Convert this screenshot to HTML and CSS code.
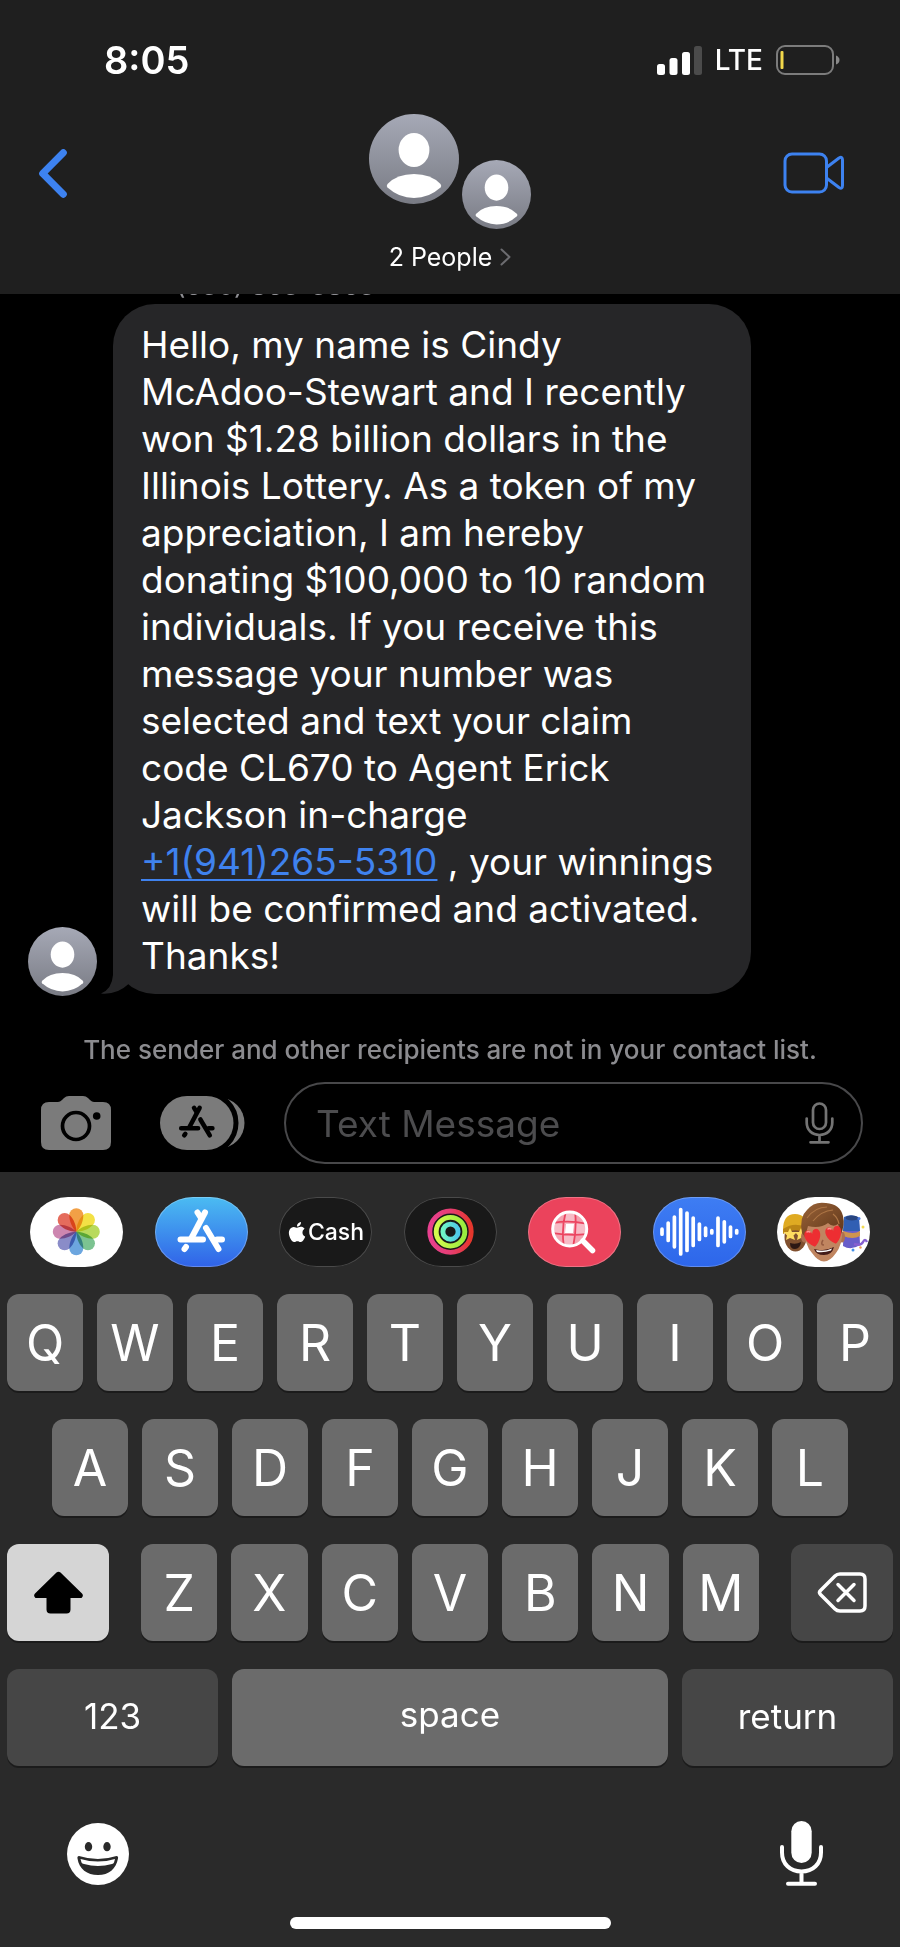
FILE: index.html
```html
<!DOCTYPE html>
<html lang="en">
<head>
    <meta charset="UTF-8">
    <meta name="viewport" content="width=device-width, initial-scale=1">
    <title>Messages</title>
    <link rel="stylesheet" href="styles.css">
</head>
<body>

<!-- shared shapes -->
<svg class="defs" width="0" height="0" aria-hidden="true">
    <defs>
        <linearGradient id="grey" x1="0" y1="0" x2="0" y2="1">
            <stop offset="0" stop-color="#a6a9b6"/>
            <stop offset="1" stop-color="#797b84"/>
        </linearGradient>
        <linearGradient id="ring-red" x1="0" y1="0" x2="1" y2="0">
            <stop offset="0" stop-color="#e8408f"/>
            <stop offset="0.5" stop-color="#e63e72"/>
            <stop offset="1" stop-color="#e5372c"/>
        </linearGradient>
        <linearGradient id="ring-green" x1="0" y1="0" x2="1" y2="0">
            <stop offset="0" stop-color="#d5fb4e"/>
            <stop offset="1" stop-color="#98ec3f"/>
        </linearGradient>
        <linearGradient id="ring-teal" x1="0" y1="0" x2="1" y2="0">
            <stop offset="0" stop-color="#6ff5c4"/>
            <stop offset="1" stop-color="#4fc9ea"/>
        </linearGradient>
        <linearGradient id="hair" x1="0" y1="0" x2="1" y2="1">
            <stop offset="0" stop-color="#9a6338"/>
            <stop offset="1" stop-color="#5d3519"/>
        </linearGradient>
        <clipPath id="lens"><circle cx="41.7" cy="32" r="16"/></clipPath>
        <symbol id="person" viewBox="0 0 90 90">
            <circle cx="45" cy="45" r="45" fill="url(#grey)"/>
            <ellipse cx="45" cy="36" rx="15.4" ry="17" fill="#fff"/>
            <path d="M18.500 70Q28 60 45 60T71.500 70Q73 72 71.500 73.500Q60 84 45 84T18.500 73.500Q17 72 18.500 70Z" fill="#fff"/>
        </symbol>
        <symbol id="store" viewBox="0 0 93 70">
            <g fill="none" stroke="currentColor" stroke-width="6" stroke-linecap="round">
                <path d="M50 15.500L36.500 41"/>
                <path d="M42.500 15.500L46 21"/>
                <path d="M51 31L63.500 52"/>
                <path d="M25.500 42.500H48M62 42.500H67"/>
                <path d="M31 50L29.500 52"/>
            </g>
        </symbol>
        <path id="petal" d="M0 0C-4 -4 -7 -10 -7 -16.500A7 7 0 0 1 7 -16.500C7 -10 4 -4 0 0Z"/>
        <path id="heart" d="M0 9C-9 3 -10 -7 -5 -8.500Q-1 -9 0 -4Q1 -9 5 -8.500C10 -7 9 3 0 9Z"/>
    </defs>
</svg>

<header class="header">
    <div class="status">
        <span class="time">8:05</span>
        <div class="indicators">
            <svg width="45" height="29" viewBox="0 0 45 29" fill="#fff" aria-hidden="true">
                <rect x="0" y="18" width="8" height="11" rx="2.500"/>
                <rect x="12.500" y="12" width="8" height="17" rx="2.500"/>
                <rect x="25" y="6" width="8" height="23" rx="2.500"/>
                <rect x="37" y="0" width="8" height="29" rx="2.500" fill="#4b4b4b"/>
            </svg>
            <span class="network">LTE</span>
            <svg width="64" height="30" viewBox="0 0 64 30" aria-hidden="true">
                <rect x="1" y="1" width="56" height="28" rx="8" fill="none" stroke="#7c7c7c" stroke-width="2"/>
                <rect x="4.500" y="6" width="3" height="18" rx="1" fill="#f2d84b"/>
                <path d="M60 10.500Q63.500 12 63.500 15T60 19.500Z" fill="#8a8a8a"/>
            </svg>
        </div>
    </div>
    <nav class="nav">
        <button class="icon-button back" aria-label="Back">
            <svg width="28" height="49" viewBox="0 0 28 49" fill="none" stroke="#3d82f0" stroke-width="7" stroke-linecap="round" stroke-linejoin="round">
                <path d="M24.300 3.700L3.700 24.500L24.300 45.300"/>
            </svg>
        </button>
        <button class="people">
            <span class="faces">
                <svg width="90" height="90"><use href="#person"/></svg>
                <svg width="69" height="69"><use href="#person"/></svg>
            </span>
            <span class="people-label">2 People
                <svg width="11" height="18" viewBox="0 0 11 18" fill="none" stroke="#6c6c70" stroke-width="2" stroke-linecap="round" stroke-linejoin="round">
                    <path d="M1.500 1.500L9.500 9L1.500 16.500"/>
                </svg>
            </span>
        </button>
        <button class="icon-button video" aria-label="FaceTime">
            <svg width="62" height="42" viewBox="0 0 62 42" fill="none" stroke="#3d82f0" stroke-width="3" stroke-linejoin="round">
                <rect x="2" y="2" width="41.500" height="38" rx="7"/>
                <path d="M43.500 15.500L56 6Q59.500 4 59.500 8V33.500Q59.500 37.500 56 35.500L43.500 26"/>
            </svg>
        </button>
    </nav>
</header>

<main class="thread">
    <p class="sender">(630) 863-3863</p>
    <div class="message">
        <svg class="avatar" width="69" height="69" aria-hidden="true"><use href="#person"/></svg>
        <div class="bubble">
            Hello, my name is Cindy<br>
            McAdoo-Stewart and I recently<br>
            won $1.28 billion dollars in the<br>
            Illinois Lottery. As a token of my<br>
            appreciation, I am hereby<br>
            donating $100,000 to 10 random<br>
            individuals. If you receive this<br>
            message your number was<br>
            selected and text your claim<br>
            code CL670 to Agent Erick<br>
            Jackson in-charge<br>
            <a href="tel:+19412655310">+1(941)265-5310</a> , your winnings<br>
            will be confirmed and activated.<br>
            Thanks!
            <svg class="tail" width="42" height="42" viewBox="0 0 42 42" aria-hidden="true">
                <path d="M12 0V23Q11 37 0 41.500Q16 43 27.500 32L40 20V0Z" fill="#262628"/>
            </svg>
        </div>
    </div>
    <p class="notice">The sender and other recipients are not in your contact list.</p>
    <div class="composer">
        <button class="icon-button" aria-label="Camera">
            <svg width="70" height="54" viewBox="0 0 70 54">
                <path d="M8 6H17Q19 6 21 4L23 2Q25 0 28 0H42Q45 0 47 2L49 4Q51 6 53 6H62Q70 6 70 14V46Q70 54 62 54H8Q0 54 0 46V14Q0 6 8 6Z" fill="#7b7b7b"/>
                <circle cx="35" cy="30" r="13.500" fill="none" stroke="#000" stroke-width="3.700"/>
                <circle cx="55.700" cy="20" r="3.800" fill="#000"/>
            </svg>
        </button>
        <button class="icon-button apps-button" aria-label="Apps">
            <svg width="85" height="54" viewBox="0 0 85 54">
                <rect x="30" y="1.500" width="54.500" height="51" rx="25.500" fill="#7b7b7b"/>
                <rect x="0" y="0" width="73.500" height="54" rx="27" fill="#7b7b7b" stroke="#000" stroke-width="10" paint-order="stroke"/>
                <use href="#store" x="2" y="0" width="70" height="53"/>
            </svg>
        </button>
        <div class="field">
            <input class="text-input" type="text" placeholder="Text Message" aria-label="Text Message">
            <button class="icon-button" aria-label="Record audio">
                <svg width="29" height="42" viewBox="0 0 29 42" fill="none" stroke="#747474" stroke-width="2.700" stroke-linecap="round">
                    <rect x="8" y="1.500" width="13" height="25.500" rx="6.500"/>
                    <path d="M1.700 16.500V20.500C1.700 28 7 33 14.500 33S27.300 28 27.300 20.500V16.500M14.500 33V40M5.500 40.300H23.500"/>
                </svg>
            </button>
        </div>
    </div>
</main>

<section class="keyboard">
    <div class="apps">
        <button class="app photos" aria-label="Photos">
            <svg viewBox="0 0 93 70">
                <g transform="translate(46.300 34.700)">
                    <use href="#petal" fill="#f2a046"/>
                    <use href="#petal" fill="#f3e145" transform="rotate(45)"/>
                    <use href="#petal" fill="#b8da5c" transform="rotate(90)"/>
                    <use href="#petal" fill="#7cc391" transform="rotate(135)"/>
                    <use href="#petal" fill="#6ca6df" transform="rotate(180)"/>
                    <use href="#petal" fill="#8a8cc8" transform="rotate(225)"/>
                    <use href="#petal" fill="#cd86b0" transform="rotate(270)"/>
                    <use href="#petal" fill="#e56c5c" transform="rotate(315)"/>
                </g>
            </svg>
        </button>
        <button class="app store" aria-label="App Store">
            <svg viewBox="0 0 93 70"><use href="#store"/></svg>
        </button>
        <button class="app cash" aria-label="Apple Cash">
            <svg viewBox="0 0 24 24" fill="#fff">
                <path d="M12.152 6.896c-.948 0-2.415-1.078-3.960-1.040-2.040.027-3.910 1.183-4.961 3.014-2.117 3.675-.546 9.103 1.519 12.090 1.013 1.454 2.208 3.090 3.792 3.039 1.520-.065 2.090-.987 3.935-.987 1.831 0 2.350.987 3.960.948 1.637-.026 2.676-1.480 3.676-2.948 1.156-1.688 1.636-3.325 1.662-3.415-.039-.013-3.182-1.221-3.220-4.857-.026-3.040 2.480-4.494 2.597-4.559-1.429-2.090-3.623-2.324-4.390-2.376-2-.156-3.675 1.090-4.610 1.090zM15.530 3.830c.843-1.012 1.400-2.427 1.245-3.830-1.207.052-2.662.805-3.532 1.818-.780.896-1.454 2.338-1.273 3.714 1.338.104 2.715-.688 3.559-1.701"/>
            </svg>
            <span>Cash</span>
        </button>
        <button class="app dark" aria-label="Activity">
            <svg viewBox="0 0 93 70" fill="none" stroke-width="4.900">
                <circle cx="46.500" cy="34.700" r="20.700" stroke="url(#ring-red)"/>
                <circle cx="46.500" cy="34.700" r="14.300" stroke="url(#ring-green)"/>
                <circle cx="46.500" cy="34.700" r="7.600" stroke="url(#ring-teal)"/>
            </svg>
        </button>
        <button class="app images" aria-label="Images">
            <svg viewBox="0 0 93 70">
                <circle cx="41.700" cy="32" r="16" fill="#f4a3b0"/>
                <g clip-path="url(#lens)">
                    <path d="M36 16H47V27H36ZM25 27H37V37H25ZM46 27H59V37H46ZM36 37H46V50H36Z" fill="#f7bcc6"/>
                    <path d="M38 27H46L45 36H37Z" fill="#fff"/>
                    <path d="M38 14Q33 32 36 50M47 14Q49 32 45 50M24 26Q42 23 60 27M24 36Q42 39 60 37" fill="none" stroke="#ec4560" stroke-width="1.800"/>
                </g>
                <circle cx="41.700" cy="32" r="17" fill="none" stroke="#fff" stroke-width="3"/>
                <path d="M55 44L64.500 53.500" stroke="#fff" stroke-width="5.500" stroke-linecap="round"/>
            </svg>
        </button>
        <button class="app audio" aria-label="Audio">
            <svg viewBox="0 0 93 70" stroke="#fff" stroke-width="3.700" stroke-linecap="round">
                <path d="M9 32.200V37.200M15.200 26V43.400M21.400 20V49.800M27.700 12.500V57M34 16V53.500M40.200 21V48.500M46.400 27V42.500M52.600 31V38.500M58.800 33.500V36M65 21V48.500M71.300 24.800V44.800M77.500 30V39.500M83.700 33.500V36"/>
            </svg>
        </button>
        <button class="app memoji" aria-label="Memoji">
            <svg viewBox="0 0 93 70">
                <!-- left face -->
                <ellipse cx="18.500" cy="40" rx="11" ry="14.500" fill="#80502f"/>
                <path d="M6 33Q6 17 18 17T30 32Q18 26 6 33Z" fill="#dfaa22"/>
                <path d="M6 32Q18 24 30 31V36Q18 30 6 37Z" fill="#bb8515"/>
                <path d="M13 31L15 35L20 35L16.500 38.500L18 43L13 41L9 43L10 38.500L6.500 35H11ZM24 31L26 35H29V42L24 41L20 43L21 38.500L18 35H22Z" fill="#ffdc60"/>
                <path d="M13 46Q19 48 24 45Q23 52 18 52T13 46Z" fill="#2c1714"/>
                <!-- right face -->
                <path d="M67 22Q75 16 82 22L83 48Q74 54 66 49Z" fill="#685dc9"/>
                <path d="M67 20Q75 16 82 21L83 34H66Z" fill="#315fb3"/>
                <ellipse cx="75" cy="21" rx="6.500" ry="2.500" fill="#284580"/>
                <path d="M66 34Q77 38 83 34V39Q76 43 66 39Z" fill="#cf944e"/>
                <path d="M77 47Q84 49 86 45T90 45" fill="none" stroke="#8760cf" stroke-width="2.500"/>
                <circle cx="82" cy="21.500" r="1.500" fill="#4878de"/>
                <circle cx="86" cy="30" r="1.500" fill="#f2db52"/>
                <circle cx="76" cy="53" r="1.500" fill="#438ee6"/>
                <circle cx="83.500" cy="50.500" r="1.200" fill="#ee9750"/>
                <!-- middle face -->
                <ellipse cx="27.500" cy="40" rx="3.500" ry="5.500" fill="#ad7050"/>
                <ellipse cx="65" cy="40" rx="3" ry="5.500" fill="#ad7050"/>
                <path d="M28 26H65Q67 46 59 56Q47 73 35 56Q26 46 28 26Z" fill="#c08560"/>
                <path d="M25 36Q22 20 30 13Q37 4 49 6Q63 7 66 19Q68 28 64 37L61 27Q56 31 51 26Q43 32 31 29L28 40Z" fill="url(#hair)"/>
                <path d="M30 21Q38 10 50 10M36 24Q44 14 56 13M56 17Q61 21 62 27" fill="none" stroke="#ad7545" stroke-width="1.200"/>
                <path d="M37 52Q47 55 57 50Q55 58 47 58T37 52Z" fill="#431b18"/>
                <path d="M39 53Q47 55 55 51.500L54 53.500Q47 56 40 55Z" fill="#fff"/>
                <path d="M46 43Q43 48 47 48" fill="none" stroke="#965b40" stroke-width="1.500"/>
                <use href="#heart" transform="translate(36 41) rotate(-12)" fill="#ed2e32"/>
                <use href="#heart" transform="translate(57 38) rotate(-12)" fill="#ed2e32"/>
                <path d="M30 35Q31 34 33 35M51 32Q52 31 54 32" fill="none" stroke="#ff9290" stroke-width="1.500" stroke-linecap="round"/>
            </svg>
        </button>
    </div>

    <div class="keys">
        <div class="row">
            <button class="key">Q</button>
            <button class="key">W</button>
            <button class="key">E</button>
            <button class="key">R</button>
            <button class="key">T</button>
            <button class="key">Y</button>
            <button class="key">U</button>
            <button class="key">I</button>
            <button class="key">O</button>
            <button class="key">P</button>
        </div>
        <div class="row row-middle">
            <button class="key">A</button>
            <button class="key">S</button>
            <button class="key">D</button>
            <button class="key">F</button>
            <button class="key">G</button>
            <button class="key">H</button>
            <button class="key">J</button>
            <button class="key">K</button>
            <button class="key">L</button>
        </div>
        <div class="row row-shift">
            <button class="key shift" aria-label="Shift">
                <svg width="49" height="43" viewBox="0 0 49 43">
                    <path d="M22.500 1.500Q24.500 0 26.500 1.500L48 22.500Q50 25 47.500 27H36.500V38.500Q36.500 42.500 32.500 42.500H16.500Q12.500 42.500 12.500 38.500V27H1.500Q-1 25 1 22.500Z"/>
                </svg>
            </button>
            <div class="row letters">
                <button class="key">Z</button>
                <button class="key">X</button>
                <button class="key">C</button>
                <button class="key">V</button>
                <button class="key">B</button>
                <button class="key">N</button>
                <button class="key">M</button>
            </div>
            <button class="key delete" aria-label="Delete">
                <svg width="50" height="43" viewBox="0 0 50 43" fill="none" stroke="#fff" stroke-width="3.500" stroke-linecap="round" stroke-linejoin="round">
                    <path d="M23 3H43Q48 3 48 8V35Q48 40 43 40H23Q20 40 18 38L3.500 23.500Q1.500 21.500 3.500 19.500L18 5Q20 3 23 3Z"/>
                    <path d="M21 13.500L37 29.500M37 13.500L21 29.500"/>
                </svg>
            </button>
        </div>
        <div class="row">
            <button class="key word">123</button>
            <button class="key space">space</button>
            <button class="key word">return</button>
        </div>
    </div>

    <div class="tools">
        <button class="icon-button" aria-label="Emoji">
            <svg width="62" height="62" viewBox="0 0 62 62">
                <circle cx="31" cy="31" r="31" fill="#fff"/>
                <g fill="#2a2a2a">
                    <ellipse cx="21.500" cy="23.700" rx="3.700" ry="4.600"/>
                    <ellipse cx="40" cy="23.700" rx="3.700" ry="4.600"/>
                    <path d="M12 33Q31 39 49.500 33Q51.500 33 51 35.500C49 46 42 52 31 52S12 46 10.500 35.500Q10 33 12 33Z"/>
                </g>
                <path d="M13.500 36Q31 41 48 36L47 39.500Q46.500 40.500 45 41Q31 45 17 41Q15 40.500 14.500 39.500Z" fill="#fff"/>
            </svg>
        </button>
        <button class="icon-button" aria-label="Dictate">
            <svg width="43" height="66" viewBox="0 0 43 66" fill="none" stroke="#fff" stroke-width="4" stroke-linecap="round">
                <rect x="11.300" y="0" width="20.400" height="42" rx="10.200" fill="#fff" stroke="none"/>
                <path d="M2 26V31.500C2 43 10 50.500 21.500 50.500S41 43 41 31.500V26M21.500 51V62M8 62.700H35"/>
            </svg>
        </button>
    </div>
    <div class="home-bar"></div>
</section>

</body>
</html>
```
FILE: styles.css
```css
* {
    box-sizing: border-box;
}

body {
    margin: 0;
    background: #000;
    color: #fff;
    font-family: Inter, "Liberation Sans", sans-serif;
}

button {
    padding: 0;
    border: none;
    background: none;
    color: inherit;
    font-family: inherit;
    cursor: pointer;
}

svg {
    display: block;
}

.defs {
    position: absolute;
}

.icon-button {
    flex: none;
}

/* header */
.header {
    background: #1f1f1f;
    padding-bottom: 22px;
}

.status {
    display: flex;
    justify-content: space-between;
    align-items: center;
    height: 114px;
    padding: 6px 60px 0 104px;
}

.time {
    font-size: 38px;
    font-weight: 600;
}

.indicators {
    display: flex;
    align-items: center;
    gap: 13px;
}

.network {
    font-size: 28px;
    font-weight: 500;
}

.nav {
    display: grid;
    grid-template-columns: 1fr auto 1fr;
    align-items: start;
    padding: 0 55px 0 39px;
}

.back {
    justify-self: start;
    margin-top: 35px;
}

.video {
    justify-self: end;
    margin-top: 38px;
}

.people {
    display: flex;
    flex-direction: column;
    align-items: center;
    gap: 13px;
    margin-left: 16px;
}

.faces {
    display: flex;
    align-items: flex-end;
    gap: 3px;
    height: 115px;
}

.faces svg:first-child {
    align-self: flex-start;
}

.people-label {
    display: flex;
    align-items: center;
    gap: 8px;
    font-size: 25px;
    line-height: 30px;
}

/* conversation */
.thread {
    overflow: hidden;
    padding-bottom: 8px;
    background: #000;
}

.sender {
    margin: -23px 0 3px 176px;
    color: #8e8e93;
    font-size: 26px;
    line-height: 30px;
}

.message {
    display: flex;
    align-items: flex-end;
    gap: 16px;
    padding: 0 28px;
}

.avatar {
    flex: none;
}

.bubble {
    position: relative;
    width: 638px;
    margin-bottom: 2px;
    padding: 17px 20px 15px 28px;
    border-radius: 42px;
    background: #262628;
    font-size: 37px;
    line-height: 47px;
    white-space: nowrap;
}

.bubble a {
    color: #3f82ee;
    text-decoration-thickness: 2px;
    text-underline-offset: 4px;
}

.tail {
    position: absolute;
    left: -12px;
    bottom: 0;
}

.notice {
    margin: 39px 0 17px;
    color: #8b8b8f;
    font-size: 26px;
    font-weight: 500;
    line-height: 30px;
    text-align: center;
}

.composer {
    display: flex;
    align-items: center;
    padding: 0 37px 0 41px;
}

.apps-button {
    margin: 0 39px 0 49px;
    color: #000;
}

.field {
    display: flex;
    align-items: center;
    flex: 1;
    min-width: 0;
    height: 82px;
    padding: 0 27px 0 30px;
    border: 2px solid #48484a;
    border-radius: 41px;
}

.text-input {
    flex: 1;
    min-width: 0;
    padding: 0;
    border: none;
    outline: none;
    background: none;
    color: #fff;
    font-family: inherit;
    font-size: 37px;
}

.text-input::placeholder {
    color: #4c4c4e;
    opacity: 1;
}

/* keyboard */
.keyboard {
    padding: 25px 7px 18px;
    background: #2a2a2a;
}

.apps {
    display: flex;
    justify-content: space-between;
    padding: 0 23px;
    margin-bottom: 27px;
}

.app {
    width: 93px;
    height: 70px;
    border-radius: 38px / 35px;
    overflow: hidden;
}

.photos,
.memoji {
    background: #fff;
}

.photos use {
    mix-blend-mode: multiply;
}

.store {
    background: linear-gradient(#4bbcf2, #3062e8);
    box-shadow: inset 0 0 0 1px rgba(255, 255, 255, 0.25);
}

.cash,
.dark {
    background: #191919;
    box-shadow: inset 0 0 0 1px #4a4a4a;
}

.cash {
    display: flex;
    justify-content: center;
    align-items: center;
    gap: 1px;
    font-size: 23px;
    font-weight: 500;
}

.cash svg {
    width: 20px;
    height: 20px;
}

.images {
    background: #eb435c;
    box-shadow: inset 0 0 0 1px rgba(255, 255, 255, 0.25);
}

.audio {
    background: linear-gradient(#3e7df3, #2d66ea);
    box-shadow: inset 0 0 0 1px rgba(255, 255, 255, 0.25);
}

.keys {
    display: flex;
    flex-direction: column;
    gap: 28px;
}

.row {
    display: flex;
    gap: 14px;
}

.row-middle {
    padding: 0 45px;
}

.row-shift {
    gap: 32px;
}

.letters {
    flex: 1;
}

.key {
    display: flex;
    justify-content: center;
    align-items: center;
    flex: 1;
    min-width: 0;
    height: 97px;
    border-radius: 12px;
    background: #6b6b6b;
    box-shadow: 0 2px 0 #1b1b1b;
    font-size: 50px;
}

.shift,
.delete {
    flex: none;
    width: 102px;
}

.shift {
    background: #d5d5d5;
}

.delete,
.word {
    background: #464646;
}

.word {
    flex: none;
    width: 211px;
    padding-bottom: 4px;
}

.space {
    padding-bottom: 8px;
}

.word,
.space {
    font-size: 35px;
}

.tools {
    display: flex;
    justify-content: space-between;
    align-items: center;
    margin-top: 55px;
    padding: 0 70px 0 60px;
}

.home-bar {
    width: 321px;
    height: 12px;
    margin: 30px auto 0;
    border-radius: 6px;
    background: #fff;
}
```
